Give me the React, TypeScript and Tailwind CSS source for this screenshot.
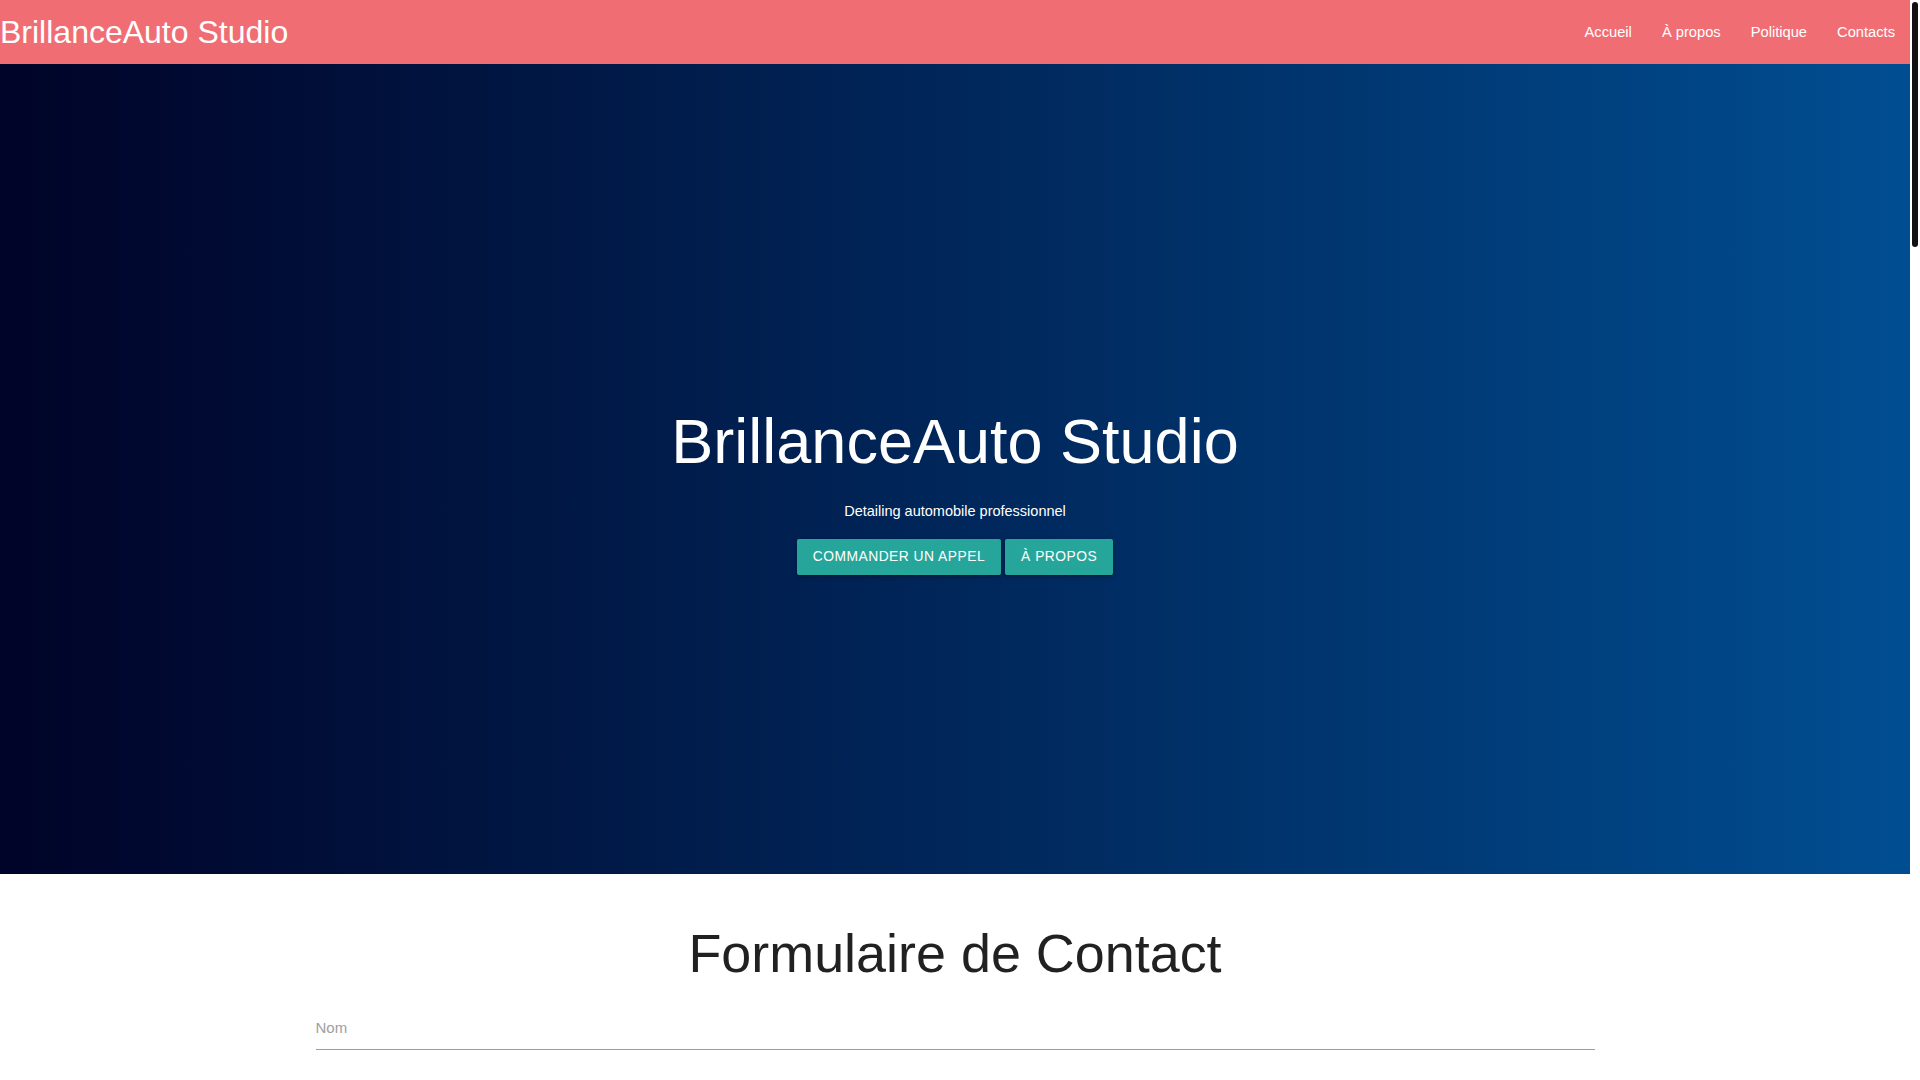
import React from "react";

function NavLink({ children }: { children: React.ReactNode }) {
  return (
    <li>
      <a href="#" className="block px-[15px] text-[14.7px] leading-[64px] text-white">
        {children}
      </a>
    </li>
  );
}

const btn =
  "h-[36px] rounded-[2px] bg-[#26a69a] px-[16px] text-[13.8px] uppercase leading-[36px] tracking-[0.5px] text-white shadow-[0_2px_2px_0_rgba(0,0,0,0.14),0_3px_1px_-2px_rgba(0,0,0,0.12),0_1px_5px_0_rgba(0,0,0,0.2)]";

export default function App() {
  return (
    <div className="flex h-screen overflow-hidden bg-white font-['Liberation_Sans',Arial,sans-serif]">
      <div className="min-w-0 flex-1 overflow-hidden">
        <nav className="flex h-[64px] items-center justify-between bg-[#f06e73]">
          <a href="#" className="text-[32px] leading-[64px] text-white">
            BrillanceAuto Studio
          </a>
          <ul className="flex">
            <NavLink>Accueil</NavLink>
            <NavLink>À propos</NavLink>
            <NavLink>Politique</NavLink>
            <NavLink>Contacts</NavLink>
          </ul>
        </nav>

        <section className="flex h-[810px] flex-col items-center bg-gradient-to-r from-[#000428] to-[#004e92] pt-[343px] text-white">
          <h1 className="mb-[25px] text-[63px] font-normal leading-[1.1]">BrillanceAuto Studio</h1>
          <p className="mb-[16px] text-[14.5px] leading-[1.5]">Detailing automobile professionnel</p>
          <div className="flex gap-[4px]">
            <a href="#" className={btn}>
              Commander un appel
            </a>
            <a href="#" className={btn}>
              À propos
            </a>
          </div>
        </section>

        <section className="pt-[50px]">
          <h2 className="mb-[22px] text-center text-[53.9px] font-normal leading-[1.1] text-[rgba(0,0,0,0.87)]">
            Formulaire de Contact
          </h2>
          <form className="mx-auto w-[1279px]">
            <div className="relative">
              <label className="absolute left-0 top-[14px] text-[15px] leading-[17px] text-[#9e9e9e]">Nom</label>
              <div className="h-[45px] w-full border-b border-[#9e9e9e]" />
            </div>
          </form>
        </section>
      </div>
      <div className="w-[10px] shrink-0 bg-white pl-[2px] pt-[2px]">
        <div className="h-[245px] w-[6px] rounded-full bg-[#111111]" />
      </div>
    </div>
  );
}
